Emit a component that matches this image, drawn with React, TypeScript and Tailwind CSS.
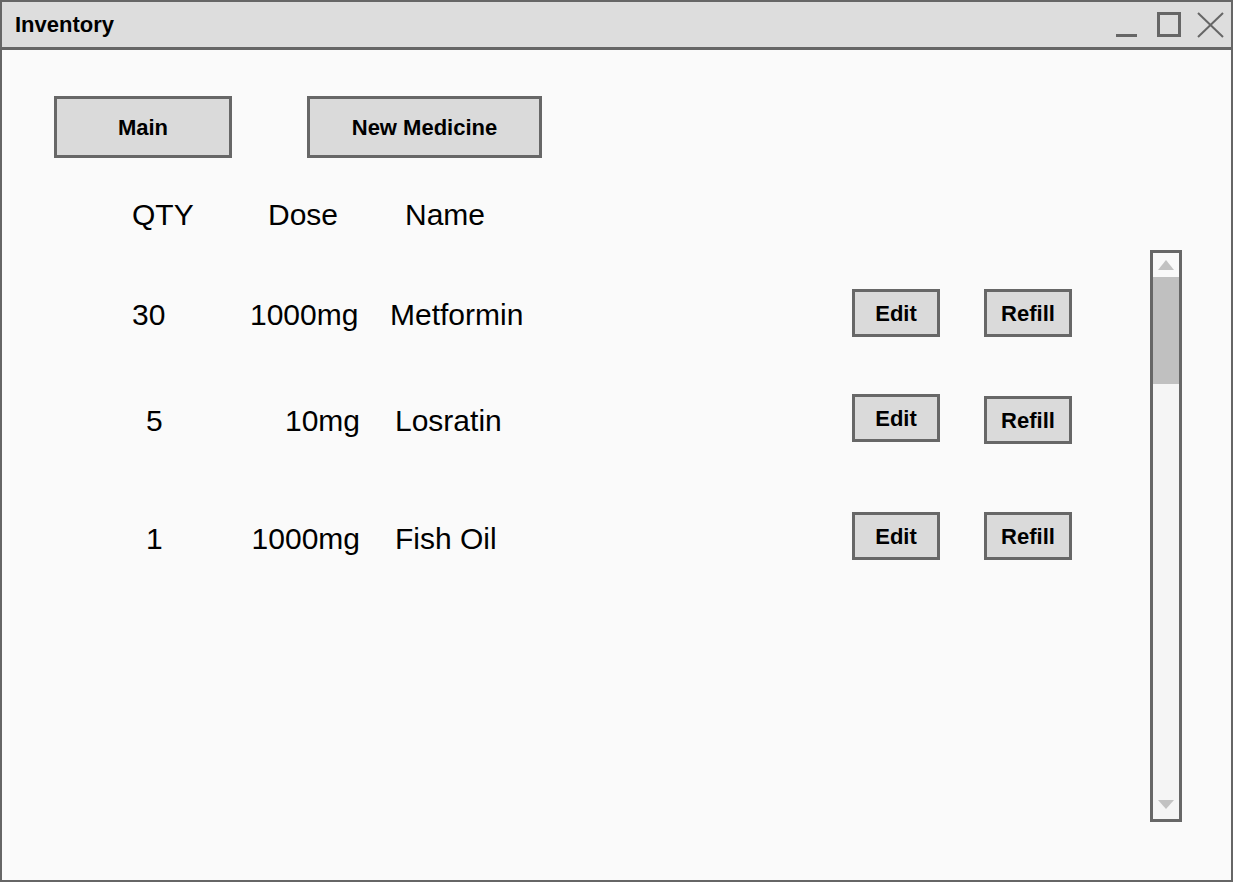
import React from "react";

const font = { fontFamily: '"Liberation Sans", Arial, sans-serif' };

function Btn({ children, className = "" }: { children: React.ReactNode; className?: string }) {
  return (
    <div
      className={
        "flex items-center justify-center border-[3px] border-[#676767] bg-[#dadada] font-bold text-black " +
        className
      }
    >
      {children}
    </div>
  );
}

type Row = {
  qty: string;
  qtyPl: string;
  dose: string;
  dosePr: string;
  name: string;
  namePl: string;
  mt: string;
  refillMt: string;
  textPt: string;
};

const rows: Row[] = [
  { qty: "30", qtyPl: "pl-[130px]", dose: "1000mg", dosePr: "pr-[3px]", name: "Metformin", namePl: "pl-[30px]", mt: "mt-[57px]", refillMt: "mt-0", textPt: "pt-[4px]" },
  { qty: "5", qtyPl: "pl-[144px]", dose: "10mg", dosePr: "pr-0", name: "Losratin", namePl: "pl-[35px]", mt: "mt-[57px]", refillMt: "mt-[2px]", textPt: "pt-[6px]" },
  { qty: "1", qtyPl: "pl-[144px]", dose: "1000mg", dosePr: "pr-0", name: "Fish Oil", namePl: "pl-[35px]", mt: "mt-[70px]", refillMt: "mt-0", textPt: "pt-[6px]" },
];

export default function App() {
  return (
    <div
      style={font}
      className="w-[1233px] h-[882px] border-2 border-[#666666] bg-[#fafafa] flex flex-col overflow-hidden text-black"
    >
      {/* Title bar */}
      <div className="h-[48px] shrink-0 bg-[#dddddd] border-b-[3px] border-[#666666] flex items-center justify-between pl-[13px] pr-[7px]">
        <span className="text-[22px] font-bold leading-none">Inventory</span>
        <svg width="110" height="26" viewBox="0 0 110 26" fill="none" stroke="#666666">
          <line x1="2" y1="23.5" x2="23" y2="23.5" strokeWidth="3" />
          <rect x="44.5" y="1.5" width="21" height="22" strokeWidth="3" />
          <line x1="84" y1="1" x2="109" y2="25" strokeWidth="2" />
          <line x1="109" y1="1" x2="84" y2="25" strokeWidth="2" />
        </svg>
      </div>

      {/* Content */}
      <div className="flex-1 flex">
        <div className="flex-1 flex flex-col">
          <div className="flex pl-[52px] pt-[46px] gap-[75px]">
            <Btn className="w-[178px] h-[62px] text-[22px]">Main</Btn>
            <Btn className="w-[235px] h-[62px] text-[22px]">New Medicine</Btn>
          </div>

          {/* Header */}
          <div className="flex items-center h-[34px] mt-[40px] text-[30px] leading-none">
            <div className="w-[248px] pl-[130px]">QTY</div>
            <div className="w-[110px] pl-[18px]">Dose</div>
            <div className="pl-[45px]">Name</div>
          </div>

          {rows.map((r, i) => (
            <div key={i} className={"flex items-start h-[48px] " + r.mt}>
              <div className={"flex items-center h-[48px] text-[30px] leading-none " + r.textPt}>
                <div className={"w-[248px] " + r.qtyPl}>{r.qty}</div>
                <div className={"w-[110px] text-right " + r.dosePr}>{r.dose}</div>
                <div className={"w-[492px] " + r.namePl}>{r.name}</div>
              </div>
              <Btn className="w-[88px] h-[48px] text-[22px]">Edit</Btn>
              <Btn className={"w-[88px] h-[48px] text-[22px] ml-[44px] " + r.refillMt}>Refill</Btn>
            </div>
          ))}
        </div>

        {/* Scrollbar */}
        <div className="w-[32px] h-[572px] mt-[200px] mr-[49px] border-[3px] border-[#676767] bg-[#f5f5f5] flex flex-col">
          <div className="h-[24px] bg-[#f9f9f9] flex items-center justify-center">
            <svg width="16" height="10" viewBox="0 0 16 10">
              <polygon points="8,0 16,10 0,10" fill="#c2c2c2" />
            </svg>
          </div>
          <div className="h-[107px] bg-[#c0c0c0]" />
          <div className="flex-1" />
          <div className="h-[21px] flex items-start justify-center pt-[2px]">
            <svg width="16" height="9" viewBox="0 0 16 9">
              <polygon points="0,0 16,0 8,9" fill="#c2c2c2" />
            </svg>
          </div>
        </div>
      </div>
    </div>
  );
}
